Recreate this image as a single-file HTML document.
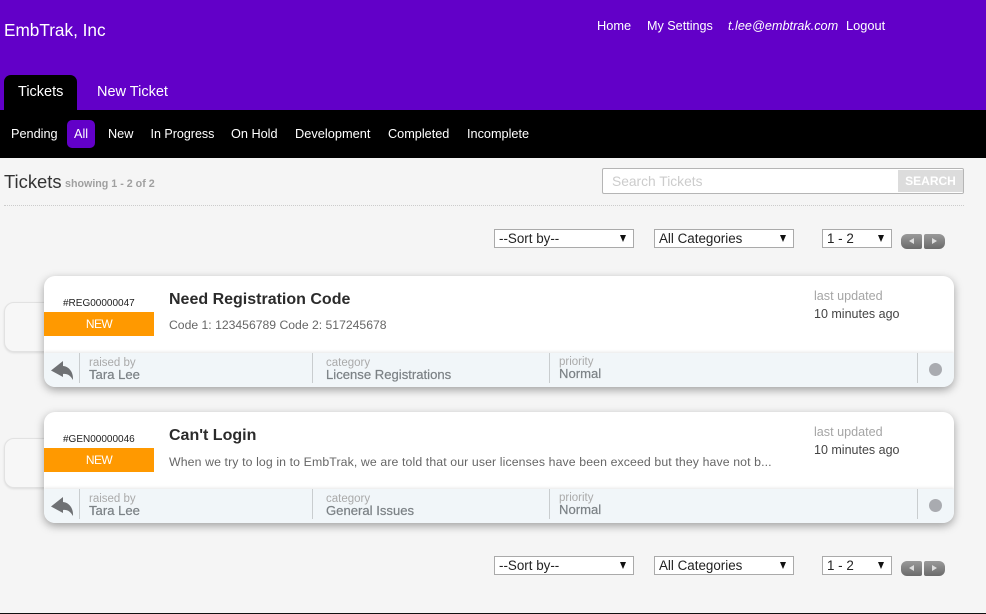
<!DOCTYPE html>
<html><head><meta charset="utf-8"><style>
html,body{margin:0;padding:0}
body{width:986px;height:614px;position:relative;overflow:hidden;background:#f5f5f5;font-family:"Liberation Sans",sans-serif}
.t{position:absolute;white-space:nowrap;line-height:1}
.w{color:#fff}
.sel{position:absolute;box-sizing:border-box;height:19px;background:#fff;border:1px solid #aaa;font-size:13.4px;color:#222;line-height:17px;padding-left:4px}
.sel i{position:absolute;right:7px;top:5px;width:0;height:0;border-left:3.5px solid transparent;border-right:3.5px solid transparent;border-top:7px solid #111}
.pg{position:absolute;width:21px;height:15px;background:linear-gradient(#9a9a9a,#6a6a6a);}
.back{position:absolute;left:4px;width:60px;height:50px;box-sizing:border-box;background:#f7f7f7;border:1px solid #e2e2e2;border-radius:10px;box-shadow:0 1px 2px rgba(0,0,0,.1)}
.card{position:absolute;left:44px;width:910px;height:111px;background:#fff;border-radius:11px;box-shadow:0 3px 9px rgba(0,0,0,.35);overflow:hidden}
.bar{position:absolute;left:0;right:0;top:77px;height:34px;background:#f1f6f9;box-shadow:0 -1px 3px rgba(0,0,0,.1)}
.sep{position:absolute;top:0;width:1px;height:30px;background:#c9cdcf}
.code{left:19px;top:23px;font-size:10px;color:#222}
.new{position:absolute;left:0;top:36px;width:110px;height:24px;background:#ff9900;color:#fff;font-size:12px;line-height:24px;text-align:center;letter-spacing:-.6px}
.title{left:125px;top:16px;font-size:16px;font-weight:bold;color:#2b2b2b}
.desc{left:125px;top:43px;font-size:12.2px;color:#666}
.lu{left:770px;top:14px;font-size:12.6px;color:#a5a5a5}
.ago{left:770px;top:32px;font-size:12.5px;color:#444}
.lab{font-size:11.5px;color:#aaa}
.val{font-size:13.1px;color:#7b8185;-webkit-text-stroke:.2px #7b8185}
.dot{position:absolute;left:885px;top:10px;width:13px;height:13px;border-radius:50%;background:#a9abb0}
</style></head><body>
<div style="position:absolute;left:0;top:0;width:986px;height:110px;background:#6200c8"></div>
<div style="position:absolute;left:0;top:110px;width:986px;height:48px;background:#000"></div>
<div class="t w" style="left:4px;top:22px;font-size:17.2px">EmbTrak, Inc</div>
<div class="t w" style="left:597px;top:20px;font-size:12.8px">Home</div>
<div class="t w" style="left:647px;top:20px;font-size:12.6px">My Settings</div>
<div class="t w" style="left:728px;top:20px;font-size:12.7px;font-style:italic">t.lee@embtrak.com</div>
<div class="t w" style="left:846px;top:20px;font-size:12.8px">Logout</div>
<div style="position:absolute;left:4px;top:75px;width:73px;height:35px;background:#000;border-radius:7px 7px 0 0"></div>
<div class="t w" style="left:18px;top:85px;font-size:14.5px">Tickets</div>
<div class="t w" style="left:97px;top:85px;font-size:14.5px">New Ticket</div>
<div style="position:absolute;left:67px;top:120px;width:28px;height:28px;background:#6200c8;border-radius:5px"></div>
<div class="t w" style="left:11px;top:128px;font-size:12.7px">Pending</div>
<div class="t w" style="left:74px;top:128px;font-size:12.7px">All</div>
<div class="t w" style="left:108px;top:128px;font-size:12.7px">New</div>
<div class="t w" style="left:150.5px;top:128px;font-size:12.5px">In Progress</div>
<div class="t w" style="left:231px;top:128px;font-size:12.7px">On Hold</div>
<div class="t w" style="left:295px;top:128px;font-size:12.8px">Development</div>
<div class="t w" style="left:388px;top:128px;font-size:12.7px">Completed</div>
<div class="t w" style="left:467px;top:128px;font-size:12.7px">Incomplete</div>

<div class="t" style="left:4px;top:173px;font-size:18.4px;color:#333">Tickets</div>
<div class="t" style="left:65px;top:179px;font-size:10.7px;font-weight:bold;color:#a0a0a0">showing 1 - 2 of 2</div>
<div style="position:absolute;left:602px;top:168px;width:362px;height:26px;box-sizing:border-box;background:#fff;border:1px solid #b5b5b5;border-radius:2px"></div>
<div class="t" style="left:612px;top:175px;font-size:13.8px;color:#ccc">Search Tickets</div>
<div class="t" style="left:898px;top:170px;width:65px;height:22px;background:#dcdcdc;color:#fff;font-size:12px;font-weight:bold;line-height:22px;text-align:center">SEARCH</div>
<div style="position:absolute;left:4px;top:205px;width:960px;border-top:1px dotted #ccc"></div>

<div class="sel" style="left:494px;top:229px;width:140px">--Sort by--<i></i></div>
<div class="sel" style="left:654px;top:229px;width:140px">All Categories<i></i></div>
<div class="sel" style="left:822px;top:229px;width:70px">1 - 2<i></i></div>
<div class="pg" style="left:901px;top:234px;border-radius:6px 2px 2px 6px"></div>
<div class="pg" style="left:924px;top:234px;border-radius:2px 6px 6px 2px"></div>
<div class="t" style="left:909px;top:238px;width:0;height:0;border-top:3px solid transparent;border-bottom:3px solid transparent;border-right:5px solid #ddd"></div>
<div class="t" style="left:932px;top:238px;width:0;height:0;border-top:3px solid transparent;border-bottom:3px solid transparent;border-left:5px solid #ddd"></div>

<div class="back" style="top:302px"></div>
<div class="card" style="top:276px">
  <div class="t code">#REG00000047</div>
  <div class="new">NEW</div>
  <div class="t title">Need Registration Code</div>
  <div class="t desc">Code 1: 123456789 Code 2: 517245678</div>
  <div class="t lu">last updated</div>
  <div class="t ago">10 minutes ago</div>
  <div class="bar">
    <svg style="position:absolute;left:6px;top:8px" width="24" height="20" viewBox="0 0 24 20"><path d="M13 0 L1 9.5 L13 16 L13 13 C17 12.5 20 14 23 19 C23.5 11 19 5.5 13 5 Z" fill="#6f7174"/></svg>
    <div class="sep" style="left:35px"></div>
    <div class="t lab" style="left:45px;top:5px">raised by</div>
    <div class="t val" style="left:45px;top:15px">Tara Lee</div>
    <div class="sep" style="left:268px"></div>
    <div class="t lab" style="left:282px;top:5px">category</div>
    <div class="t val" style="left:282px;top:15px">License Registrations</div>
    <div class="sep" style="left:505px"></div>
    <div class="t lab" style="left:515px;top:4px">priority</div>
    <div class="t val" style="left:515px;top:14px">Normal</div>
    <div class="sep" style="left:873px"></div>
    <div class="dot"></div>
  </div>
</div>

<div class="back" style="top:438px"></div>
<div class="card" style="top:412px">
  <div class="t code">#GEN00000046</div>
  <div class="new">NEW</div>
  <div class="t title">Can't Login</div>
  <div class="t desc" style="top:44px;font-size:12.3px;letter-spacing:.11px">When we try to log in to EmbTrak, we are told that our user licenses have been exceed but they have not b...</div>
  <div class="t lu">last updated</div>
  <div class="t ago">10 minutes ago</div>
  <div class="bar">
    <svg style="position:absolute;left:6px;top:8px" width="24" height="20" viewBox="0 0 24 20"><path d="M13 0 L1 9.5 L13 16 L13 13 C17 12.5 20 14 23 19 C23.5 11 19 5.5 13 5 Z" fill="#6f7174"/></svg>
    <div class="sep" style="left:35px"></div>
    <div class="t lab" style="left:45px;top:5px">raised by</div>
    <div class="t val" style="left:45px;top:15px">Tara Lee</div>
    <div class="sep" style="left:268px"></div>
    <div class="t lab" style="left:282px;top:5px">category</div>
    <div class="t val" style="left:282px;top:15px">General Issues</div>
    <div class="sep" style="left:505px"></div>
    <div class="t lab" style="left:515px;top:4px">priority</div>
    <div class="t val" style="left:515px;top:14px">Normal</div>
    <div class="sep" style="left:873px"></div>
    <div class="dot"></div>
  </div>
</div>

<div class="sel" style="left:494px;top:556px;width:140px">--Sort by--<i></i></div>
<div class="sel" style="left:654px;top:556px;width:140px">All Categories<i></i></div>
<div class="sel" style="left:822px;top:556px;width:70px">1 - 2<i></i></div>
<div class="pg" style="left:901px;top:561px;border-radius:6px 2px 2px 6px"></div>
<div class="pg" style="left:924px;top:561px;border-radius:2px 6px 6px 2px"></div>
<div class="t" style="left:909px;top:565px;width:0;height:0;border-top:3px solid transparent;border-bottom:3px solid transparent;border-right:5px solid #ddd"></div>
<div class="t" style="left:932px;top:565px;width:0;height:0;border-top:3px solid transparent;border-bottom:3px solid transparent;border-left:5px solid #ddd"></div>
<div style="position:absolute;left:0;top:613px;width:986px;height:1px;background:#111"></div>
</body></html>
